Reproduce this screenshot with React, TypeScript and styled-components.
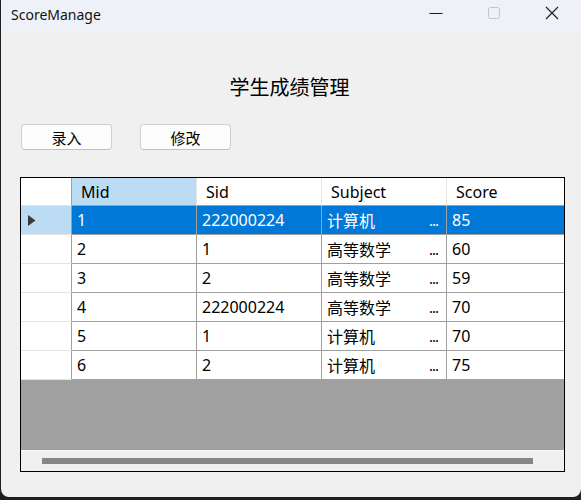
import React from "react";
import styled, { createGlobalStyle } from "styled-components";

const Global = createGlobalStyle`
  html, body { margin: 0; padding: 0; background: #1e1f22; }
  body { font-family: "Noto Sans", "Noto Sans CJK SC", sans-serif; }
  #root { width: 581px; height: 500px; overflow: hidden; }
`;

const Window = styled.div`
  width: 580px;
  height: 497px;
  margin-left: 1px;
  background: #f0f0f0;
  border-radius: 0 0 8px 8px;
  overflow: hidden;
  display: flex;
  flex-direction: column;
`;

const TitleBar = styled.div`
  height: 32px;
  flex: 0 0 32px;
  background: #eef2f8;
  display: flex;
  align-items: center;
`;

const Title = styled.div`
  flex: 1;
  padding-left: 10px;
  font-size: 14px;
  color: #111;
  line-height: 32px;
  margin-top: -2px;
`;

const Controls = styled.div`
  display: flex;
  height: 32px;
`;

const ControlButton = styled.div`
  width: 58px;
  height: 32px;
  display: flex;
  align-items: center;
  justify-content: center;
  margin-top: -3px;
`;

const Content = styled.div`
  flex: 1;
  display: flex;
  flex-direction: column;
  padding: 41px 0 0 19px;
`;

const Heading = styled.div`
  font-family: "Noto Sans CJK SC", sans-serif;
  font-size: 20px;
  line-height: 28px;
  text-align: center;
  color: #000;
  padding-right: 22px;
`;

const ButtonRow = styled.div`
  display: flex;
  gap: 28px;
  margin-top: 23px;
  padding-left: 1px;
`;

const Button = styled.div`
  box-sizing: border-box;
  width: 91px;
  height: 26px;
  background: #fdfdfd;
  border: 1px solid #d0d0d0;
  border-bottom-color: #c0c0c0;
  border-radius: 4px;
  display: flex;
  align-items: center;
  justify-content: center;
  font-family: "Noto Sans CJK SC", sans-serif;
  font-size: 15px;
  color: #000;
`;

const Grid = styled.div`
  box-sizing: border-box;
  width: 545px;
  height: 295px;
  margin-top: 27px;
  border: 1px solid #000;
  display: flex;
  flex-direction: column;
  background: #a0a0a0;
`;

const Row = styled.div<{ $header?: boolean }>`
  display: grid;
  grid-template-columns: 51px 125px 125px 125px 117px;
  height: ${(p) => (p.$header ? 28 : 29)}px;
`;

type CellKind = "corner" | "header" | "rowHeader" | "data";

const Cell = styled.div<{ $kind: CellKind; $active?: boolean; $last?: boolean }>`
  box-sizing: border-box;
  display: flex;
  align-items: center;
  justify-content: space-between;
  font-size: 16px;
  white-space: nowrap;
  overflow: hidden;
  border-bottom: 1px solid
    ${(p) => (p.$kind === "rowHeader" || p.$kind === "corner" ? "#e3e3e3" : "#a0a0a0")};
  border-right: ${(p) =>
    p.$last
      ? "none"
      : p.$kind === "header"
      ? "1px solid #e5e5e5"
      : "1px solid #a0a0a0"};
  padding-left: ${(p) =>
    p.$kind === "header" ? "9px" : p.$kind === "rowHeader" ? "7px" : "5px"};
  padding-right: 8px;
  background: ${(p) =>
    p.$kind === "data"
      ? p.$active
        ? "#0078d7"
        : "#ffffff"
      : p.$active
      ? "#bcdcf4"
      : "#ffffff"};
  color: ${(p) => (p.$kind === "data" && p.$active ? "#ffffff" : "#000000")};
`;

const CellText = styled.span`
  font-family: "Noto Sans", "Noto Sans CJK SC", sans-serif;
`;

const Dots = styled.span`
  letter-spacing: -1px;
  font-size: 15px;
`;

const Empty = styled.div`
  flex: 1;
  background: #a0a0a0;
`;

const ScrollArea = styled.div`
  height: 21px;
  flex: 0 0 21px;
  box-sizing: border-box;
  border-top: 1px solid #f7f7f7;
  background: #f0f0f0;
  padding: 7px 0 0 21px;
`;

const Thumb = styled.div`
  width: 491px;
  height: 6px;
  background: #868686;
`;

const rows = [
  { mid: "1", sid: "222000224", subject: "计算机", score: "85" },
  { mid: "2", sid: "1", subject: "高等数学", score: "60" },
  { mid: "3", sid: "2", subject: "高等数学", score: "59" },
  { mid: "4", sid: "222000224", subject: "高等数学", score: "70" },
  { mid: "5", sid: "1", subject: "计算机", score: "70" },
  { mid: "6", sid: "2", subject: "计算机", score: "75" },
];

export default function App() {
  return (
    <>
      <Global />
      <Window>
        <TitleBar>
          <Title>ScoreManage</Title>
          <Controls>
            <ControlButton>
              <svg width="14" height="14" viewBox="0 0 14 14">
                <path d="M0.5 7.5 H13.5" stroke="#1a1a1a" strokeWidth="1" />
              </svg>
            </ControlButton>
            <ControlButton>
              <svg width="14" height="14" viewBox="0 0 14 14">
                <rect x="1.5" y="1.5" width="11" height="11" rx="2" fill="none" stroke="#c4c4c4" strokeWidth="1" />
              </svg>
            </ControlButton>
            <ControlButton>
              <svg width="14" height="14" viewBox="0 0 14 14">
                <path d="M1 1 L13 13 M13 1 L1 13" stroke="#1a1a1a" strokeWidth="1.1" />
              </svg>
            </ControlButton>
          </Controls>
        </TitleBar>
        <Content>
          <Heading>学生成绩管理</Heading>
          <ButtonRow>
            <Button>录入</Button>
            <Button>修改</Button>
          </ButtonRow>
          <Grid>
            <Row $header>
              <Cell $kind="corner" />
              <Cell $kind="header" $active>
                <CellText>Mid</CellText>
              </Cell>
              <Cell $kind="header">
                <CellText>Sid</CellText>
              </Cell>
              <Cell $kind="header">
                <CellText>Subject</CellText>
              </Cell>
              <Cell $kind="header" $last>
                <CellText>Score</CellText>
              </Cell>
            </Row>
            {rows.map((r, i) => {
              const active = i === 0;
              return (
                <Row key={r.mid}>
                  <Cell $kind="rowHeader" $active={active}>
                    {active && (
                      <svg width="8" height="11" viewBox="0 0 8 11">
                        <path d="M0 0 L7.5 5.5 L0 11 Z" fill="#3a3a3a" />
                      </svg>
                    )}
                  </Cell>
                  <Cell $kind="data" $active={active}>
                    <CellText>{r.mid}</CellText>
                  </Cell>
                  <Cell $kind="data" $active={active}>
                    <CellText>{r.sid}</CellText>
                  </Cell>
                  <Cell $kind="data" $active={active}>
                    <CellText>{r.subject}</CellText>
                    <Dots>...</Dots>
                  </Cell>
                  <Cell $kind="data" $active={active} $last>
                    <CellText>{r.score}</CellText>
                  </Cell>
                </Row>
              );
            })}
            <Empty />
            <ScrollArea>
              <Thumb />
            </ScrollArea>
          </Grid>
        </Content>
      </Window>
    </>
  );
}
